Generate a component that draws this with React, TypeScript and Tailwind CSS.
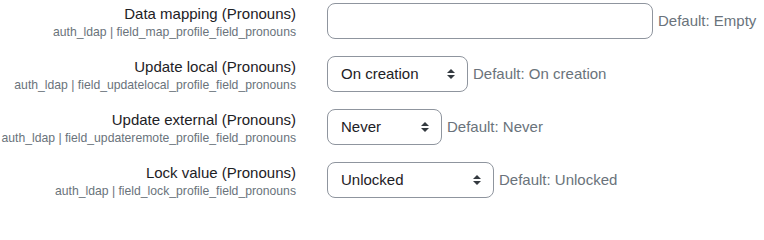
import React from 'react';

type Row = {
    label: string;
    hint: string;
    kind: 'text' | 'select';
    value?: string;
    width: string;
    def: string;
};

const rows: Row[] = [
    { label: 'Data mapping (Pronouns)', hint: 'auth_ldap | field_map_profile_field_pronouns', kind: 'text', width: 'w-[326px]', def: 'Default: Empty' },
    { label: 'Update local (Pronouns)', hint: 'auth_ldap | field_updatelocal_profile_field_pronouns', kind: 'select', value: 'On creation', width: 'w-[141px]', def: 'Default: On creation' },
    { label: 'Update external (Pronouns)', hint: 'auth_ldap | field_updateremote_profile_field_pronouns', kind: 'select', value: 'Never', width: 'w-[115px]', def: 'Default: Never' },
    { label: 'Lock value (Pronouns)', hint: 'auth_ldap | field_lock_profile_field_pronouns', kind: 'select', value: 'Unlocked', width: 'w-[167px]', def: 'Default: Unlocked' },
];

function SelectArrows() {
    return (
        <svg width="8" height="10" viewBox="0 0 4 5" className="absolute right-[12px] top-1/2 -translate-y-1/2">
            <path d="M2 0L0 2h4zm0 5L0 3h4z" fill="#343a40" />
        </svg>
    );
}

export default function App() {
    return (
        <div className="w-[764px] h-[202px] overflow-hidden bg-white pt-[3px] font-['Liberation_Sans',Arial,sans-serif]">
            {rows.map((r) => (
                <div key={r.label} className="flex items-start h-[36px] mb-[17px]">
                    <div className="w-[296px] shrink-0 text-right pt-[1px]">
                        <div className="text-[15px] leading-[20px] text-[#1d2125]">{r.label}</div>
                        <div className="text-[12.2px] leading-[16px] text-[#6a737b] whitespace-nowrap">{r.hint}</div>
                    </div>
                    <div className="ml-[31px] flex items-center h-[36px]">
                        {r.kind === 'text' ? (
                            <div className={`${r.width} h-[36px] border border-[#8f959e] rounded-lg bg-white`} />
                        ) : (
                            <div className={`${r.width} relative h-[36px] border border-[#8f959e] rounded-lg bg-white flex items-center pl-[13px] text-[15px] text-[#1d2125]`}>
                                {r.value}
                                <SelectArrows />
                            </div>
                        )}
                        <span className="ml-[5px] text-[15px] text-[#6a737b]">{r.def}</span>
                    </div>
                </div>
            ))}
        </div>
    );
}
